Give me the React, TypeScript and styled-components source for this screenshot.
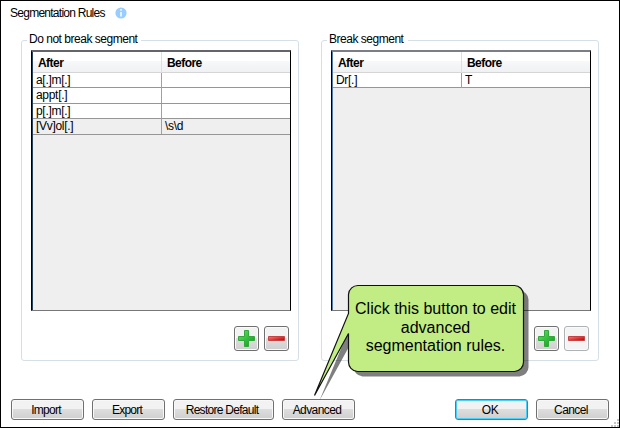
import React from "react";
import styled, { createGlobalStyle } from "styled-components";

const Global = createGlobalStyle`
  * { box-sizing: border-box; }
  body { margin: 0; background: #fff; }
`;

const Dialog = styled.main`
  position: relative;
  width: 620px;
  height: 428px;
  border: 1px solid #000;
  background: #fff;
  color: #000;
  font: 12px/16px "Liberation Sans", Arial, sans-serif;
  overflow: hidden;
  display: flex;
  flex-direction: column;
`;

const Label = styled.span<{ $spacing?: number }>`
  letter-spacing: ${(p) => p.$spacing ?? 0}px;
  white-space: pre;
`;

const TitleBar = styled.header`
  display: flex;
  align-items: center;
  height: 24px;
  padding-left: 9px;
`;

const Title = styled.div`
  width: 105px;
`;

const Panels = styled.div`
  display: flex;
  gap: 22px;
  height: 329px;
  margin-top: 7px;
  padding-left: 20px;
`;

const Group = styled.fieldset`
  width: 278px;
  height: 329px;
  margin: 0;
  padding: 0 7px 0 9px;
  border: 1px solid #d5dfe5;
  border-radius: 3px;
  min-width: 0;
`;

const Legend = styled.legend<{ $width: number }>`
  width: ${(p) => p.$width}px;
  height: 17px;
  margin-left: -4px;
  padding: 0 0 0 2px;
  line-height: 15px;
`;

const Grid = styled.div<{ $dotted?: boolean }>`
  width: 260px;
  height: 261px;
  margin-top: 1px;
  background: #efefef;
  border: solid #000;
  border-width: 2px 1px 1px 1px;
  border-top-color: ${(p) => (p.$dotted ? "#63656a" : "#7b7e84")};
  border-bottom-color: #777;
  box-shadow: inset 1px 0 ${(p) => (p.$dotted ? "#29425c" : "#527ba5")};
  padding-left: 1px;
`;

const Row = styled.div<{ $height: number; $shaded?: boolean }>`
  display: grid;
  grid-template-columns: 129px 1fr;
  height: ${(p) => p.$height}px;
  background: ${(p) => (p.$shaded ? "#efefef" : "#fff")};
  border-bottom: 1px solid #969696;
`;

const Cell = styled.div`
  padding-left: 3px;
  line-height: 15px;
  letter-spacing: -0.3px;
  &:first-child { border-right: 1px solid #a0a0a0; }
`;

const HeadRow = styled(Row)`
  background: linear-gradient(#fff 0 45%, #f7f8f9 46%, #f0f1f2);
  border-bottom-color: #d5d5d5;
`;

const HeadCell = styled(Cell)`
  padding-left: 5px;
  line-height: 22px;
  font-weight: bold;
  &:first-child { border-right-color: #dedfe1; }
`;

const Tools = styled.div`
  display: flex;
  justify-content: flex-end;
  gap: 5px;
  margin-top: 15px;
  padding-right: 2px;
`;

const ToolButton = styled.button<{ $disabled?: boolean }>`
  width: 25px;
  height: 25px;
  padding: 0;
  display: grid;
  place-items: center;
  border: 1px solid ${(p) => (p.$disabled ? "#adb2b5" : "#707070")};
  border-radius: 3px;
  background: ${(p) => (p.$disabled ? "#f4f4f4" : "linear-gradient(#f2f2f2 0 48%, #dddddd 50%, #cfcfcf)")};
  box-shadow: inset 0 0 0 1px #fafafa;
`;

const Footer = styled.footer`
  display: flex;
  gap: 8px;
  margin-top: 38px;
  padding: 0 10px;
`;

const Spacer = styled.div`
  flex: 1;
`;

const Button = styled.button<{ $width?: number; $primary?: boolean }>`
  width: ${(p) => p.$width ?? 73}px;
  height: 21px;
  padding: 2px 3px 0 0;
  color: #000;
  font: 12px/17px "Liberation Sans", Arial, sans-serif;
  border: 1px solid ${(p) => (p.$primary ? "#3c7fb1" : "#707070")};
  border-radius: 3px;
  background: linear-gradient(#f2f2f2 0 47%, #dddddd 50%, #cfcfcf);
  box-shadow: inset 0 0 0 1px ${(p) => (p.$primary ? "#48d0f8" : "#f8f8f8")};
`;

const Callout = styled.aside`
  position: absolute;
  left: 306px;
  top: 278px;
  width: 230px;
  height: 125px;
`;

const Bubble = styled.svg`
  display: block;
`;

const CalloutText = styled.p`
  position: absolute;
  left: 41px;
  top: 21px;
  width: 175px;
  margin: 0;
  text-align: center;
  font-size: 16px;
  line-height: 18.5px;
  white-space: pre;
`;

const Grip = styled.svg`
  position: absolute;
  right: 0;
  bottom: 0;
`;

const InfoIcon = () => (
  <svg width="12" height="12" viewBox="0 0 12 12">
    <circle cx="6" cy="6" r="5.6" fill="#99ccff" />
    <path d="M6 2v1.7M6 5v4.6" stroke="#eef7ff" strokeWidth="1.8" />
  </svg>
);

const PlusIcon = () => (
  <svg width="19" height="19" viewBox="0 0 19 19">
    <defs>
      <linearGradient id="green" x1="0" y1="0" x2="1" y2="1">
        <stop offset="0" stopColor="#70df70" />
        <stop offset=".55" stopColor="#2cbd37" />
        <stop offset="1" stopColor="#129923" />
      </linearGradient>
    </defs>
    <path d="M7.5 1.5h4v6h6v4h-6v6h-4v-6h-6v-4h6z" fill="url(#green)" stroke="#35a63b" />
  </svg>
);

const MinusIcon = () => (
  <svg width="19" height="19" viewBox="0 0 19 19">
    <defs>
      <linearGradient id="red" x1="0" y1="0" x2="1" y2="1">
        <stop offset="0" stopColor="#f28080" />
        <stop offset=".5" stopColor="#df3a3a" />
        <stop offset="1" stopColor="#b50000" />
      </linearGradient>
    </defs>
    <path d="M1.5 7.5h16v4h-16z" fill="url(#red)" stroke="#c44444" />
  </svg>
);

type Rule = { after: string; before: string; height: number; shaded?: boolean };

const keepRules: Rule[] = [
  { after: "a[.]m[.]", before: "", height: 15 },
  { after: "appt[.]", before: "", height: 16 },
  { after: "p[.]m[.]", before: "", height: 15 },
  { after: "[Vv]ol[.]", before: "\\s\\d", height: 16, shaded: true },
];

const breakRules: Rule[] = [{ after: "Dr[.]", before: "T", height: 15 }];

type PanelProps = {
  title: string;
  legendWidth: number;
  rules: Rule[];
  dotted?: boolean;
  removeDisabled?: boolean;
};

const RulePanel = ({ title, legendWidth, rules, dotted, removeDisabled }: PanelProps) => (
  <Group>
    <Legend $width={legendWidth}>
      <Label $spacing={-0.48}>{title}</Label>
    </Legend>
    <Grid $dotted={dotted}>
      <HeadRow $height={21}>
        <HeadCell><Label $spacing={-0.55}>After</Label></HeadCell>
        <HeadCell><Label $spacing={-0.55}>Before</Label></HeadCell>
      </HeadRow>
      {rules.map((r) => (
        <Row key={r.after} $height={r.height} $shaded={r.shaded}>
          <Cell>{r.after}</Cell>
          <Cell>{r.before}</Cell>
        </Row>
      ))}
    </Grid>
    <Tools>
      <ToolButton aria-label="Add"><PlusIcon /></ToolButton>
      <ToolButton aria-label="Remove" $disabled={removeDisabled}><MinusIcon /></ToolButton>
    </Tools>
  </Group>
);

const bubblePath =
  "M51.5 6.5H207.5A9.5 9.5 0 0 1 216.5 15.5V82.5A9.5 9.5 0 0 1 207.5 92.5H50.5A9.5 9.5 0 0 1 41.5 82.5V54.5L7.5 116.5L41.5 34.5V15.5A9.5 9.5 0 0 1 51.5 6.5Z";

export default function App() {
  return (
    <>
      <Global />
      <Dialog>
        <TitleBar>
          <Title><Label $spacing={-0.74}>Segmentation Rules</Label></Title>
          <InfoIcon />
        </TitleBar>
        <Panels>
          <RulePanel title="Do not break segment" legendWidth={114} rules={keepRules} dotted />
          <RulePanel title="Break segment" legendWidth={81} rules={breakRules} removeDisabled />
        </Panels>
        <Footer>
          <Button><Label $spacing={-0.75}>Import</Label></Button>
          <Button><Label $spacing={-0.8}>Export</Label></Button>
          <Button $width={101}><Label $spacing={-0.72}>Restore Default</Label></Button>
          <Button><Label $spacing={-0.6}>Advanced</Label></Button>
          <Spacer />
          <Button $primary><Label $spacing={-0.3}>OK</Label></Button>
          <Button><Label $spacing={-0.6}>Cancel</Label></Button>
        </Footer>
        <Callout>
          <Bubble width="230" height="125" viewBox="0 0 230 125">
            <path d={bubblePath} transform="translate(5 5)" fill="#000" fillOpacity=".5" />
            <path d={bubblePath} fill="#c2ed85" stroke="#111" strokeWidth="1.2" />
          </Bubble>
          <CalloutText>{"Click this button to edit\nadvanced\nsegmentation rules."}</CalloutText>
        </Callout>
        <Grip width="8" height="8" viewBox="0 0 8 8">
          <path d="M6 0h2v2H6zM3 3h2v2H3zM6 3h2v2H6zM0 6h2v2H0zM3 6h2v2H3zM6 6h2v2H6z" fill="#c4c4c4" />
        </Grip>
      </Dialog>
    </>
  );
}
